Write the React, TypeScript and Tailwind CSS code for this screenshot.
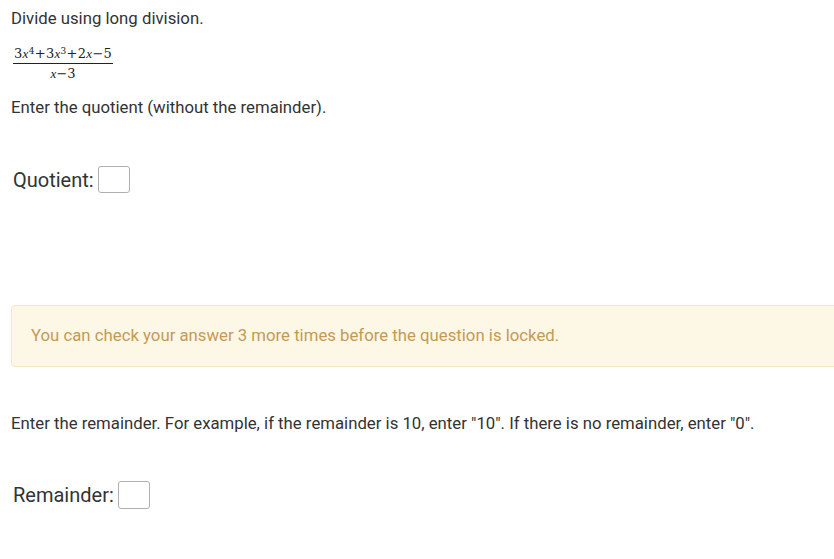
import React from "react";

const I = ({ children }: { children: React.ReactNode }) => (
  <span
    className="italic"
    style={{ fontFamily: "'Liberation Serif', 'DejaVu Serif', serif" }}
  >
    {children}
  </span>
);

export default function App() {
  return (
    <div
      className="w-screen h-screen overflow-hidden bg-white text-[#333333]"
      style={{ fontFamily: "Roboto, 'Liberation Sans', sans-serif" }}
    >
      <div className="pl-[11px] pt-[6px]">
        <p className="text-[16.75px] leading-6">Divide using long division.</p>
        <div
          className="mt-[17px] ml-[2px] inline-flex flex-col items-center text-[13px] leading-none text-[#222]"
          style={{ fontFamily: "'DejaVu Serif', 'Liberation Serif', serif" }}
        >
          <span className="px-[1px] pb-[3px] tracking-[0.3px]">
            3<I>x</I>
            <sup className="text-[9px]">4</sup>+3<I>x</I>
            <sup className="text-[9px]">3</sup>+2<I>x</I>−5
          </span>
          <span className="w-full border-t border-[#222]"></span>
          <span className="pt-[3px]">
            <I>x</I>−3
          </span>
        </div>
        <p className="mt-[15px] text-[16.75px] leading-6">
          Enter the quotient (without the remainder).
        </p>
        <div className="mt-[47px] ml-[2px] flex items-center gap-[4px]">
          <span className="text-[20px] leading-6 text-[#333]">Quotient:</span>
          <span className="inline-block w-[32px] h-[27px] rounded-[3px] border border-[#b0b0b0] bg-white"></span>
        </div>
        <div className="mt-[112px] w-[860px] h-[62px] flex items-center pl-[19px] rounded-[4px] border border-[#f7e6c4] bg-[#fdf7e5] text-[#c49a55] text-[16.75px]">
          You can check your answer 3 more times before the question is locked.
        </div>
        <p className="mt-[44px] text-[16.75px] leading-6">
          Enter the remainder. For example, if the remainder is 10, enter "10". If
          there is no remainder, enter "0".
        </p>
        <div className="mt-[46px] ml-[2px] flex items-center gap-[4px]">
          <span className="text-[20px] leading-6 text-[#333]">Remainder:</span>
          <span className="inline-block w-[32px] h-[28px] rounded-[3px] border border-[#b0b0b0] bg-white"></span>
        </div>
      </div>
    </div>
  );
}
